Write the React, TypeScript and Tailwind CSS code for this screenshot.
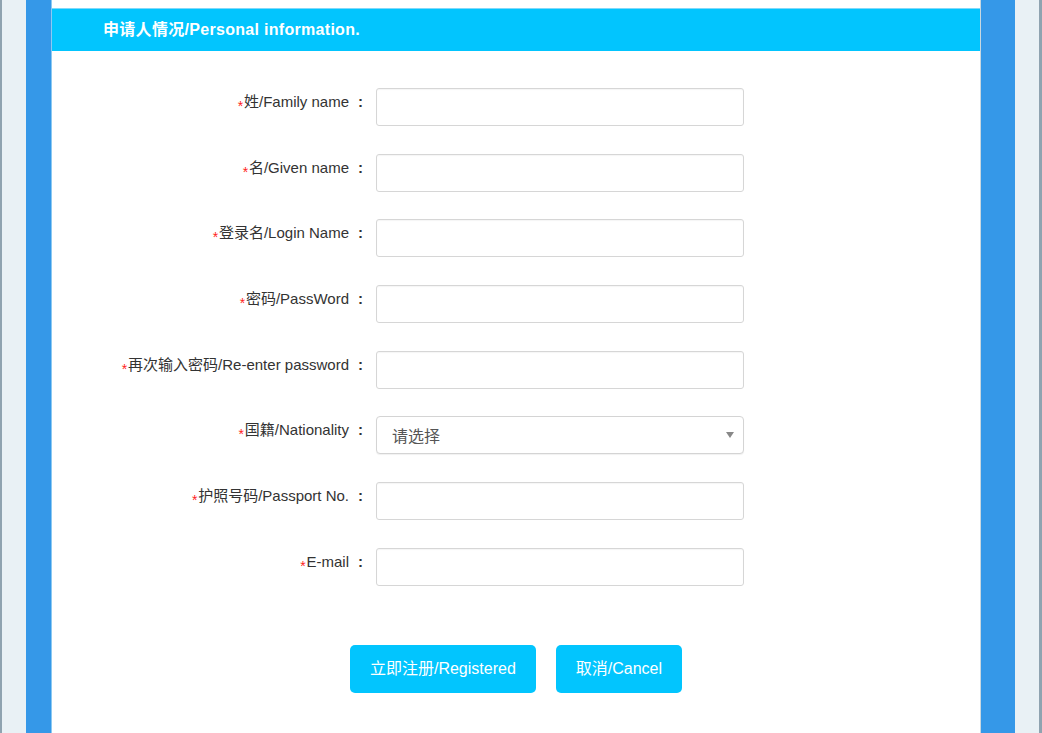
const FIELDS: { label: string; type?: 'select' }[] = [
  { label: '姓/Family name' },
  { label: '名/Given name' },
  { label: '登录名/Login Name' },
  { label: '密码/PassWord' },
  { label: '再次输入密码/Re-enter password' },
  { label: '国籍/Nationality', type: 'select' },
  { label: '护照号码/Passport No.' },
  { label: 'E-mail' },
]

function Row({ label, type }: { label: string; type?: 'select' }) {
  return (
    <div className="flex items-start">
      <label className="w-[324px] shrink-0 pr-[4px] pt-[4px] text-right text-[15px] leading-[20px] text-[#333]">
        <span className="inline-block w-[7px] translate-y-[4px] text-center text-[14px] leading-[14px] text-[#f22]">*</span>
        {label}
        <span className="inline-block w-[23px] text-center font-bold">:</span>
      </label>
      {type === 'select' ? (
        <div className="flex h-[38px] w-[368px] items-center justify-between rounded-[4px] border border-[#d4d4d4] bg-white pl-[15px] pr-[9px] shadow-[0_1px_1px_rgba(0,0,0,0.06)]">
          <span className="pt-[4px] text-[16px] text-[#555]">请选择</span>
          <span className="h-0 w-0 border-x-[4px] border-t-[6px] border-x-transparent border-t-[#888]" />
        </div>
      ) : (
        <input
          type="text"
          className="h-[38px] w-[368px] rounded-[3px] border border-[#d6d6d6] bg-white px-3 text-[15px] outline-none shadow-[inset_0_1px_1px_rgba(0,0,0,0.04)]"
        />
      )}
    </div>
  )
}

export default function App() {
  return (
    <div className="flex min-h-[733px] border-l-[2px] border-r-[3px] border-[#8fa3b0] bg-[#e9f1f5] px-[24px] font-['Liberation_Sans','Noto_Sans_CJK_SC',sans-serif]">
      <div className="flex flex-1 bg-[#3598e8] pl-[25px] pr-[34px]">
        <div className="flex-1 border-l border-r border-l-[#8cc9f2] border-r-[#c9d7e0] bg-white pt-[8px] pb-[40px]">
          <div className="flex h-[43px] items-center border-t border-[#7fd9fa] bg-[#02c5fe] pl-[51px] text-[16px] font-bold tracking-[0.3px] text-white">
            申请人情况/Personal information.
          </div>

          <form className="flex flex-col gap-[27.7px] pt-[37px]">
            {FIELDS.map(f => (
              <Row key={f.label} label={f.label} type={f.type} />
            ))}
          </form>

          <div className="mt-[59px] flex justify-center gap-[20px]">
            <button className="h-[48px] rounded-[5px] bg-[#02c5fe] px-[20px] text-[16px] text-white">
              立即注册/Registered
            </button>
            <button className="h-[48px] rounded-[5px] bg-[#02c5fe] px-[20px] text-[16px] text-white">
              取消/Cancel
            </button>
          </div>
        </div>
      </div>
    </div>
  )
}
